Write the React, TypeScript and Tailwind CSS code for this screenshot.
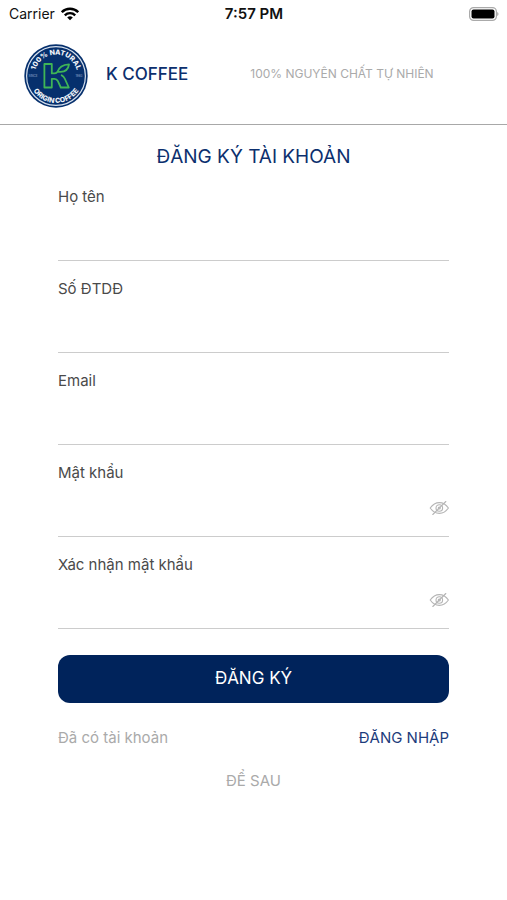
import { useState } from 'react';

function Logo() {
  return (
    <svg viewBox="0 0 64 64" className="size-16 shrink-0" role="img" aria-label="K Coffee">
      <defs>
        <path id="arc-top" d="M10.5 32a21.5 21.5 0 0 1 43 0" />
        <path id="arc-bottom" d="M5 32a27 27 0 0 0 54 0" />
      </defs>
      <circle cx="32" cy="32" r="31.7" fill="#06306d" />
      <circle cx="32" cy="32" r="29.4" fill="none" stroke="#d5dfec" strokeWidth="1.2" />
      <g fill="#f1f5fa" fontFamily="Inter, sans-serif" fontWeight="800" textAnchor="middle">
        <text fontSize="7">
          <textPath href="#arc-top" startOffset="50%">100% NATURAL</textPath>
        </text>
        <text fontSize="7">
          <textPath href="#arc-bottom" startOffset="50%">ORIGIN COFFEE</textPath>
        </text>
        <text x="9" y="33" fontSize="3" fontWeight="400" fill="#9db2d0">SINCE</text>
        <text x="55" y="33" fontSize="3" fontWeight="400" fill="#9db2d0">1983</text>
      </g>
      <g fill="none" stroke="#3fb556" strokeWidth="1.800" strokeLinejoin="round" strokeLinecap="round">
        <path d="M33.500 27.800c1.500-5 5-7.200 11.500-7.500-.6 5-3.500 7.300-8.500 7.500h-3c-1.200 1.300-2 1.600-3.300 1.600h-2.400V20h-7.400v23.500h7.400v-8.700h2.600c1.800 0 2.700.7 3.500 2.400l2.900 6.300h8L40.700 34.500c-.8-1.700-1.600-2.600-3-3.200" />
      </g>
    </svg>
  );
}

function EyeOff() {
  return (
    <svg viewBox="0 0 20 16" className="h-4 w-5" fill="none" stroke="#b5b5b5" strokeWidth="1.100" strokeLinecap="round" aria-hidden="true">
      <path d="M1.200 8c2.500-3.600 5.500-5.400 9.200-5.400S17 4.400 19.400 8c-2.500 3.600-5.500 5.400-9 5.400S3.700 11.600 1.200 8z" />
      <circle cx="10.300" cy="8" r="3.300" />
      <circle cx="10.300" cy="8" r="1" />
      <path d="M3.800 14.500 16.800 1.500" />
    </svg>
  );
}

function StatusBar() {
  return (
    <div className="grid h-7 grid-cols-3 items-center pr-2 pl-[9px] text-[14px] leading-5 text-[#111]">
      <div className="flex items-center gap-[6px]">
        <span>Carrier</span>
        <svg viewBox="0 0 18 14" className="h-[14px] w-[18px]" fill="none" stroke="#000" strokeWidth="2.400" aria-label="Wi-Fi">
          <path d="M.8 5.200a11.600 11.600 0 0 1 16.400 0" />
          <path d="M3.800 8.300a7.400 7.400 0 0 1 10.400 0" />
          <path d="M9 13.300 6.200 10.500a4 4 0 0 1 5.600 0z" fill="#000" stroke="none" />
        </svg>
      </div>
      <span className="text-center text-[15px] font-semibold">7:57 PM</span>
      <svg viewBox="0 0 30 14" className="h-[14px] w-[30px] justify-self-end" aria-label="Battery">
        <rect x=".6" y=".6" width="26.800" height="12.800" rx="4" fill="#fff" stroke="#aaa" strokeWidth="1.200" />
        <rect x="2.500" y="2.500" width="23" height="9" rx="2" fill="#000" />
        <path d="M28.300 5c1.500.5 1.500 3.500 0 4z" fill="#999" />
      </svg>
    </div>
  );
}

type FieldProps = { id: string; label: string; type?: string };

function Field({ id, label, type = 'text' }: FieldProps) {
  const [visible, setVisible] = useState(false);
  const secret = type === 'password';
  return (
    <div className="border-b border-[#ccc] pt-[18px]">
      <label htmlFor={id} className="block text-[15px] leading-5 text-[#4a4a4a]">
        {label}
      </label>
      <div className="flex h-[53px] items-center pb-1">
        <input
          id={id}
          type={secret && visible ? 'text' : type}
          className="h-full min-w-0 flex-1 bg-transparent text-[15px] text-[#333] outline-none"
        />
        {secret && (
          <button type="button" aria-label="Hiện mật khẩu" onClick={() => setVisible(!visible)}>
            <EyeOff />
          </button>
        )}
      </div>
    </div>
  );
}

export default function App() {
  return (
    <div className="min-h-screen bg-white font-[Inter,'Noto_Sans',sans-serif]">
      <StatusBar />
      <header className="flex h-[97px] items-center border-b border-[#a8a8a8] pl-6">
        <Logo />
        <div className="flex items-center pb-1">
          <span className="ml-[18px] text-[17px] leading-6 font-medium text-[#0c2f6e]">K COFFEE</span>
          <span className="ml-[62px] text-[12px] leading-5 whitespace-nowrap text-[#aaa]">100% NGUYÊN CHẤT TỰ NHIÊN</span>
        </div>
      </header>
      <main className="px-[58px] pt-5">
        <h1 className="text-center text-[19px] leading-6 text-[#0c2f6e]">ĐĂNG KÝ TÀI KHOẢN</h1>
        <form onSubmit={(e) => e.preventDefault()}>
          <Field id="name" label="Họ tên" />
          <Field id="phone" label="Số ĐTDĐ" type="tel" />
          <Field id="email" label="Email" type="email" />
          <Field id="password" label="Mật khẩu" type="password" />
          <Field id="confirm" label="Xác nhận mật khẩu" type="password" />
          <button type="submit" className="mt-[26px] h-12 w-full rounded-xl bg-[#00235b] text-[17px] text-white">
            ĐĂNG KÝ
          </button>
        </form>
        <div className="mt-[25px] flex justify-between text-[15px] leading-5">
          <span className="text-[#aaa]">Đã có tài khoản</span>
          <a href="#login" className="text-[#1d3c7c]">ĐĂNG NHẬP</a>
        </div>
        <div className="mt-[23px] text-center text-[15px] leading-5 text-[#aaa]">
          <button type="button">ĐỂ SAU</button>
        </div>
      </main>
    </div>
  );
}
